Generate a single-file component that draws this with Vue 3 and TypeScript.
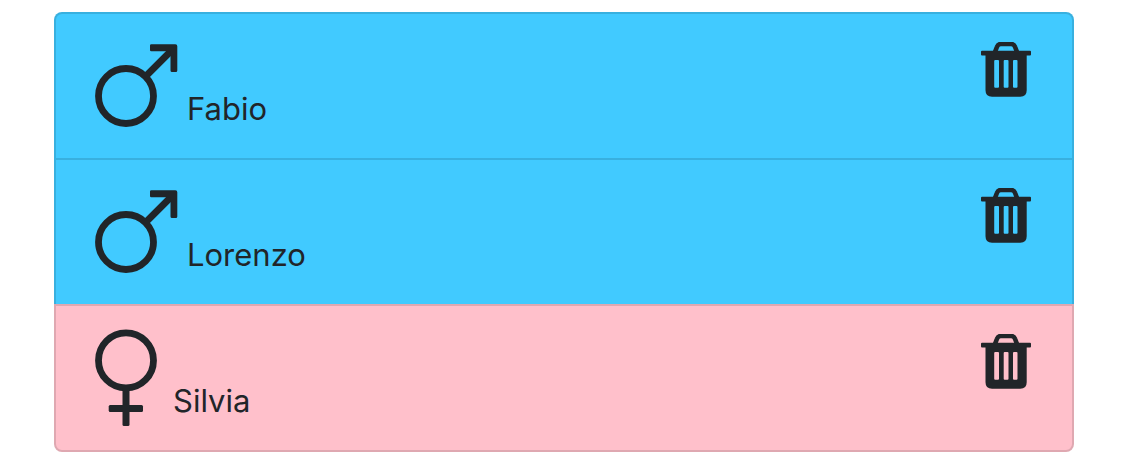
<script setup lang="ts">
import { ref } from 'vue'

interface Person {
  id: number
  name: string
  gender: 'male' | 'female'
}

const people = ref<Person[]>([
  { id: 1, name: 'Fabio', gender: 'male' },
  { id: 2, name: 'Lorenzo', gender: 'male' },
  { id: 3, name: 'Silvia', gender: 'female' },
])

function remove(id: number) {
  people.value = people.value.filter((p) => p.id !== id)
}
</script>

<template>
  <main class="page">
    <ul class="list">
      <li v-for="person in people" :key="person.id" class="item" :class="person.gender">
        <div class="person">
          <svg v-if="person.gender === 'male'" class="symbol symbol-male" viewBox="0 0 84 100" aria-hidden="true">
            <circle cx="32" cy="60" r="27.5" fill="none" stroke="currentColor" stroke-width="6.8" />
            <path d="M51 41L78 14" fill="none" stroke="currentColor" stroke-width="6.8" />
            <path
              d="M57.3 8.3H81.3Q83.3 8.3 83.3 10.3V34.5Q83.3 36 81.8 36H78Q76.5 36 76.5 34.5V15.2H57.3Q56 15.2 56 13.9V9.6Q56 8.3 57.3 8.3Z"
              fill="currentColor"
            />
          </svg>
          <svg v-else class="symbol symbol-female" viewBox="0 0 70 100" aria-hidden="true">
            <circle cx="32" cy="32.4" r="27.5" fill="none" stroke="currentColor" stroke-width="6.8" />
            <rect x="28.5" y="60" width="7" height="38" rx="1.5" fill="currentColor" />
            <rect x="14.7" y="77" width="34.3" height="7" rx="1.5" fill="currentColor" />
          </svg>
          <span class="name">{{ person.name }}</span>
        </div>
        <button class="remove" type="button" :aria-label="`Delete ${person.name}`" @click="remove(person.id)">
          <svg class="trash" viewBox="0 0 52 56" aria-hidden="true">
            <path
              d="M14.8 10.5L17 4.8Q18 2 21 2H31Q34 2 35 4.8L37.2 10.5"
              fill="none"
              stroke="currentColor"
              stroke-width="4.6"
            />
            <rect x="1" y="8.8" width="50" height="4.6" rx="1" fill="currentColor" />
            <path
              fill="currentColor"
              fill-rule="evenodd"
              d="M5.5 12H46.7V48.3Q46.7 54.8 40.2 54.8H12Q5.5 54.8 5.5 48.3ZM15.2 18.1Q14.2 18.1 14.2 19.1V44.8Q14.2 45.8 15.2 45.8H18Q19 45.8 19 44.8V19.1Q19 18.1 18 18.1ZM24.7 18.1Q23.7 18.1 23.7 19.1V44.8Q23.7 45.8 24.7 45.8H27.5Q28.5 45.8 28.5 44.8V19.1Q28.5 18.1 27.5 18.1ZM34 18.1Q33 18.1 33 19.1V44.8Q33 45.8 34 45.8H36.5Q37.5 45.8 37.5 44.8V19.1Q37.5 18.1 36.5 18.1Z"
            />
          </svg>
        </button>
      </li>
    </ul>
  </main>
</template>

<style scoped>
.page {
  padding: 12px 56px 6px 54px;
  font-family: Inter, "Liberation Sans", sans-serif;
  font-size: 31px;
  line-height: 48px;
  color: #212529;
}

.list {
  margin: 0;
  padding: 0;
  list-style: none;
}

.item {
  display: flex;
  justify-content: space-between;
  align-items: flex-start;
  padding: 22px 40px 22px 38px;
  border: 2px solid rgba(0, 0, 0, 0.125);
}

.item + .item {
  margin-top: -2px;
}

.item:first-child {
  border-top-left-radius: 8px;
  border-top-right-radius: 8px;
}

.item:last-child {
  border-bottom-left-radius: 8px;
  border-bottom-right-radius: 8px;
}

.male {
  background-color: #41caff;
}

.female {
  background-color: #ffc0cb;
}

.person {
  display: flex;
  align-items: flex-end;
  gap: 9px;
}

.symbol {
  display: block;
  height: 100px;
}

.symbol-male {
  width: 84px;
}

.symbol-female {
  width: 70px;
}

.name {
  padding-bottom: 3px;
}

.remove {
  margin: 6px 0 0;
  padding: 0;
  border: 0;
  background: none;
  color: inherit;
  cursor: pointer;
}

.trash {
  display: block;
  width: 52px;
  height: 56px;
}
</style>

<style>
body {
  background: #fff;
}
</style>
